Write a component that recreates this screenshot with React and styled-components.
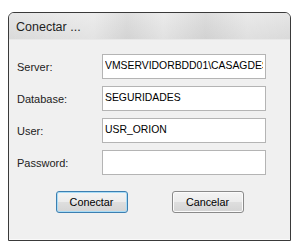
import styled, { createGlobalStyle } from "styled-components";

const GlobalStyle = createGlobalStyle`
  html, body {
    margin: 0;
    padding: 0;
    background: #ffffff;
  }
  body {
    font-family: "Liberation Sans", Arial, sans-serif;
  }
`;

const Page = styled.div`
  padding: 12px 0 0 8px;
`;

const Window = styled.div`
  width: 283px;
  height: 229px;
  box-sizing: border-box;
  border: 1px solid #3a3a3a;
  border-radius: 6px 6px 0 0;
  background: #f0f0f0;
  display: flex;
  flex-direction: column;
  overflow: hidden;
`;

const TitleBar = styled.div`
  height: 27px;
  flex-shrink: 0;
  display: flex;
  align-items: center;
  padding-left: 7px;
  padding-top: 1px;
  box-sizing: border-box;
  background:
    linear-gradient(90deg,
      rgba(255,255,255,0) 0%,
      rgba(255,255,255,0.25) 30%,
      rgba(0,0,0,0.03) 42%,
      rgba(255,255,255,0.2) 55%,
      rgba(0,0,0,0.04) 70%,
      rgba(255,255,255,0.15) 85%,
      rgba(255,255,255,0) 100%),
    linear-gradient(180deg, #e6e6e6 0%, #dadada 100%);
  border-bottom: 1px solid #e8e8e8;
`;

const Title = styled.span`
  font-size: 12.5px;
  color: #1e1e1e;
`;

const Body = styled.div`
  flex: 1;
  padding: 14px 0 0 8px;
  display: flex;
  flex-direction: column;
  box-shadow: inset 0 -6px 0 -5px #fafafa;
`;

const Form = styled.div`
  display: grid;
  grid-template-columns: 85px 164px;
  grid-auto-rows: 25px;
  row-gap: 7px;
  align-items: center;
`;

const Label = styled.label`
  font-size: 11px;
  color: #222;
`;

const Field = styled.input`
  width: 164px;
  height: 25px;
  box-sizing: border-box;
  border: 1px solid #b4b4b4;
  background: #ffffff;
  font-family: "Liberation Sans", Arial, sans-serif;
  font-size: 10.4px;
  color: #000;
  padding: 0 2px 3px 2px;
  margin: 0;
  outline: none;
`;

const Buttons = styled.div`
  display: flex;
  justify-content: center;
  gap: 44px;
  margin-top: 16px;
  padding-right: 8px;
`;

const Button = styled.button`
  width: 72px;
  height: 22px;
  box-sizing: border-box;
  border-radius: 3px;
  border: 1px solid ${(p) => (p.$primary ? "#3c7fb1" : "#8a8a8a")};
  box-shadow: inset 0 0 0 1px ${(p) => (p.$primary ? "#a9dcf6" : "#fbfbfb")};
  background: linear-gradient(180deg, #f4f4f4 0%, #ececec 48%, #dedede 52%, #d4d4d4 100%);
  font-family: "Liberation Sans", Arial, sans-serif;
  font-size: 10.8px;
  color: #000;
  padding: 0;
`;

export default function App() {
  return (
    <Page>
      <GlobalStyle />
      <Window>
        <TitleBar>
          <Title>Conectar ...</Title>
        </TitleBar>
        <Body>
          <Form>
            <Label>Server:</Label>
            <Field defaultValue="VMSERVIDORBDD01\CASAGDES" />
            <Label>Database:</Label>
            <Field defaultValue="SEGURIDADES" />
            <Label>User:</Label>
            <Field defaultValue="USR_ORION" />
            <Label>Password:</Label>
            <Field type="password" defaultValue="" />
          </Form>
          <Buttons>
            <Button $primary>Conectar</Button>
            <Button>Cancelar</Button>
          </Buttons>
        </Body>
      </Window>
    </Page>
  );
}
